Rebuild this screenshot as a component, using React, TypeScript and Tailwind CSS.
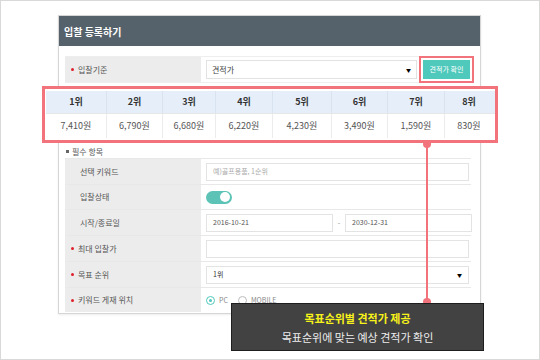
const ranks = [
  { rank: "1위", price: "7,410원", w: "w-[61px]" },
  { rank: "2위", price: "6,790원", w: "w-[56px]" },
  { rank: "3위", price: "6,680원", w: "w-[53px]" },
  { rank: "4위", price: "6,220원", w: "w-[57px]" },
  { rank: "5위", price: "4,230원", w: "w-[59px]" },
  { rank: "6위", price: "3,490원", w: "w-[56px]" },
  { rank: "7위", price: "1,590원", w: "w-[57px]" },
  { rank: "8위", price: "830원", w: "w-[48px]" },
]

function Label({ text, required = false }: { text: string; required?: boolean }) {
  return (
    <div className="flex w-[136px] shrink-0 items-center gap-[4px] bg-[#ececec] pl-[6px] text-[8px] text-[#555]">
      {required ? <span className="h-[3px] w-[3px] rounded-full bg-[#e0202c]" /> : <span className="w-[3px]" />}
      <span className={required ? "" : "pl-[2px]"}>{text}</span>
    </div>
  )
}

function Row({ h, children }: { h: string; children: React.ReactNode }) {
  return <div className={`flex ${h} border-b border-[#e8e8e8]`}>{children}</div>
}

export default function App() {
  return (
    <div
      className="relative h-[360px] w-[540px] overflow-hidden border border-[#d9d9d9] bg-white"
      style={{ fontFamily: '"Noto Sans CJK KR", "Noto Sans", sans-serif' }}
    >
      <div className="ml-[57px] mt-[14px] w-[423px] border border-[#d6d6d6] bg-white shadow-[0_1px_2px_rgba(0,0,0,0.08)]">
        <div className="flex h-[30px] items-center bg-[#56626b] px-[5px] text-[10px] font-bold text-white">
          입찰 등록하기
        </div>

        <div className="pb-[1px] pl-[6px] pr-[9px] pt-[10px]">
          {/* 입찰기준 */}
          <div className="flex h-[27px] border-y border-[#eeeeee]">
            <Label text="입찰기준" required />
            <div className="flex flex-1 items-center pl-[5px]">
              <div className="flex h-[19px] w-[211px] items-center justify-between border border-[#e2e2e2] px-[5px] text-[8px] text-[#444]">
                <span>견적가</span>
                <span className="text-[5px] text-black">▼</span>
              </div>
              <div className="ml-[2px] flex h-[27px] w-[55px] items-center justify-center border-2 border-[#f2737c]">
                <div className="flex h-[19px] w-[47px] items-center justify-center bg-[#4ec9bc] text-[7px] text-white">
                  견적가 확인
                </div>
              </div>
            </div>
          </div>

          {/* highlighted price table */}
          <div className="relative z-10 ml-[-23px] mt-[3px] w-[456px] border-[3px] border-[#f2737c] bg-white py-[2px] pl-[1px]">
            <div className="flex h-[22px] bg-[#e5eef9]">
              {ranks.map((r) => (
                <div
                  key={r.rank}
                  className={`${r.w} flex items-center justify-center border-r border-[#d8e3ef] text-[9px] font-bold text-[#333] last:border-r-0`}
                >
                  {r.rank}
                </div>
              ))}
            </div>
            <div className="flex h-[25px] border-t border-[#e6e6e6]">
              {ranks.map((r) => (
                <div
                  key={r.price}
                  className={`${r.w} flex items-center justify-center border-r border-[#ececec] text-[9px] text-[#555] last:border-r-0`}
                >
                  {r.price}
                </div>
              ))}
            </div>
          </div>

          <div className="mt-[2px] flex h-[13px] items-center gap-[3px] pl-[1px] text-[8px] text-[#555]">
            <span className="h-[3px] w-[3px] bg-[#666]" />
            필수 항목
          </div>

          <div className="border-t border-[#e8e8e8]">
            <Row h="h-[26px]">
              <Label text="선택 키워드" />
              <div className="flex flex-1 items-center pl-[5px]">
                <div className="flex h-[18px] w-[263px] items-center border border-[#e3e3e3] px-[6px] text-[7px] text-[#aaa]">
                  예)골프용품, 1순위
                </div>
              </div>
            </Row>
            <Row h="h-[25px]">
              <Label text="입찰상태" />
              <div className="flex flex-1 items-center pl-[5px]">
                <div className="flex h-[13px] w-[26px] items-center justify-end rounded-full bg-[#5cc3b6] pr-[2px]">
                  <span className="h-[10px] w-[10px] rounded-full bg-white" />
                </div>
              </div>
            </Row>
            <Row h="h-[26px]">
              <Label text="시작/종료일" />
              <div className="flex flex-1 items-center pl-[5px]">
                <div className="flex h-[18px] w-[127px] items-center border border-[#e3e3e3] px-[6px] text-[7px] text-[#555]">
                  2016-10-21
                </div>
                <span className="w-[12px] text-center text-[7px] text-[#888]">-</span>
                <div className="flex h-[18px] w-[127px] items-center border border-[#e3e3e3] px-[6px] text-[7px] text-[#555]">
                  2030-12-31
                </div>
              </div>
            </Row>
            <Row h="h-[26px]">
              <Label text="최대 입찰가" required />
              <div className="flex flex-1 items-center pl-[5px]">
                <div className="h-[18px] w-[263px] border border-[#e3e3e3]" />
              </div>
            </Row>
            <Row h="h-[26px]">
              <Label text="목표 순위" required />
              <div className="flex flex-1 items-center pl-[5px]">
                <div className="flex h-[18px] w-[263px] items-center justify-between border border-[#e3e3e3] px-[6px] text-[7px] text-[#333]">
                  <span>1위</span>
                  <span className="text-[5px] text-black">▼</span>
                </div>
              </div>
            </Row>
            <div className="flex h-[24px]">
              <Label text="키워드 게재 위치" required />
              <div className="flex flex-1 items-center gap-[4px] pl-[5px] text-[7px] text-[#888]">
                <span className="flex h-[9px] w-[9px] items-center justify-center rounded-full border-[1.5px] border-[#4ec9bc]">
                  <span className="h-[3px] w-[3px] rounded-full bg-[#4ec9bc]" />
                </span>
                <span className="mr-[6px]">PC</span>
                <span className="h-[9px] w-[9px] rounded-full border border-[#bbb]" />
                <span>MOBILE</span>
              </div>
            </div>
          </div>
        </div>
      </div>

      {/* connector */}
      <div className="absolute left-[425px] top-[143px] z-20 h-[158px] w-[2px] bg-[#f2737c]" />
      <div className="absolute left-[422px] top-[139px] z-20 h-[8px] w-[8px] rounded-full bg-[#f2737c]" />
      <div className="absolute left-[422px] top-[297px] z-20 h-[8px] w-[8px] rounded-full bg-[#f2737c]" />

      {/* callout */}
      <div className="absolute left-[230px] top-[302px] z-30 flex h-[48px] w-[253px] flex-col items-center justify-center gap-[3px] border border-[#1e1e1e] bg-[#424242]">
        <div className="text-[11px] font-bold leading-[16px] text-[#f7f21a]">목표순위별 견적가 제공</div>
        <div className="text-[11px] leading-[16px] text-[#eeeeee]">목표순위에 맞는 예상 견적가 확인</div>
      </div>
    </div>
  )
}
